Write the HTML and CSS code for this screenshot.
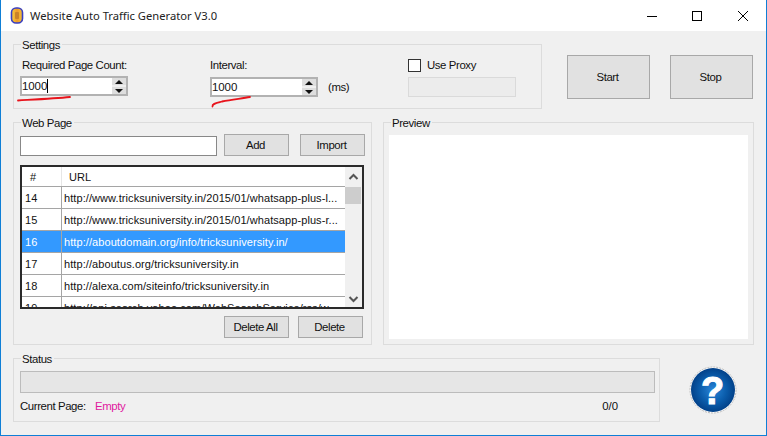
FILE: index.html
```html
<!DOCTYPE html>
<html lang="en">
<head>
<meta charset="utf-8">
<title>Website Auto Traffic Generator V3.0</title>
<link rel="stylesheet" href="styles.css">
</head>
<body>
<div class="window">
  <header class="titlebar">
    <svg class="app-icon" width="14" height="17" viewBox="0 0 14 17">
      <defs><linearGradient id="ig" x1="0" x2="1" y1="0" y2="0"><stop offset="0" stop-color="#f8d23c"/><stop offset=".5" stop-color="#ee9a2a"/><stop offset="1" stop-color="#f6c43a"/></linearGradient></defs>
      <rect x="1.500" y="1" width="11" height="15" rx="4.500" fill="url(#ig)" stroke="#3a3fc0" stroke-width="1.600"/>
      <rect x="5" y="5" width="4" height="7" rx="1" fill="#c98228"/>
    </svg>
    <span class="title-text">Website Auto Traffic Generator V3.0</span>
    <div class="controls">
      <svg width="10" height="10" viewBox="0 0 10 10"><path d="M0 5.500H10" stroke="#000" fill="none"/></svg>
      <svg width="10" height="10" viewBox="0 0 10 10"><rect x=".5" y=".5" width="9" height="9" stroke="#000" fill="none"/></svg>
      <svg class="close" width="10" height="10" viewBox="0 0 10 10"><path d="M0 0L10 10M10 0L0 10" stroke="#000" stroke-width="1" fill="none"/></svg>
    </div>
  </header>

  <main class="content">
    <div class="row row-top">
      <section class="group settings">
        <div class="legend">Settings</div>
        <div class="settings-body">
          <div class="field field-count">
            <label class="field-label">Required Page Count:</label>
            <div class="spin">
              <span class="spin-value">1000<i class="caret"></i></span>
              <span class="stepper"><b class="up"></b><b class="down"></b></span>
            </div>
          </div>
          <div class="field field-interval">
            <label class="field-label">Interval:</label>
            <div class="spin-line">
              <div class="spin">
                <span class="spin-value">1000</span>
                <span class="stepper"><b class="up"></b><b class="down"></b></span>
              </div>
              <span class="unit">(ms)</span>
            </div>
          </div>
          <div class="field field-proxy">
            <div class="check-line"><span class="checkbox"></span><span>Use Proxy</span></div>
            <div class="disabled-box"></div>
          </div>
        </div>
      </section>
      <div class="actions">
        <button class="btn big">Start</button>
        <button class="btn big">Stop</button>
      </div>
    </div>

    <div class="row row-mid">
      <section class="group webpage">
        <div class="legend">Web Page</div>
        <div class="add-line">
          <div class="url-input"></div>
          <button class="btn small">Add</button>
          <button class="btn small import">Import</button>
        </div>
        <div class="list">
          <div class="list-main">
            <div class="list-row head"><span class="c1 hash">#</span><span class="c2 pad">URL</span></div>
            <div class="list-row"><span class="c1">14</span><span class="c2">http://www.tricksuniversity.in/2015/01/whatsapp-plus-l...</span></div>
            <div class="list-row"><span class="c1">15</span><span class="c2">http://www.tricksuniversity.in/2015/01/whatsapp-plus-r...</span></div>
            <div class="list-row selected"><span class="c1">16</span><span class="c2">http://aboutdomain.org/info/tricksuniversity.in/</span></div>
            <div class="list-row"><span class="c1">17</span><span class="c2">http://aboutus.org/tricksuniversity.in</span></div>
            <div class="list-row"><span class="c1">18</span><span class="c2">http://alexa.com/siteinfo/tricksuniversity.in</span></div>
            <div class="list-row"><span class="c1">19</span><span class="c2">http://api.search.yahoo.com/WebSearchService/rss/w...</span></div>
          </div>
          <div class="scrollbar">
            <svg width="17" height="20" viewBox="0 0 17 20"><path d="M4.500 12L8.500 8L12.500 12" stroke="#555" stroke-width="2" fill="none"/></svg>
            <div class="thumb"></div>
            <svg class="arrow-down" width="17" height="20" viewBox="0 0 17 20"><path d="M4.500 8L8.500 12L12.500 8" stroke="#555" stroke-width="2" fill="none"/></svg>
          </div>
        </div>
        <div class="delete-line">
          <button class="btn small">Delete All</button>
          <button class="btn small">Delete</button>
        </div>
      </section>
      <section class="group preview">
        <div class="legend">Preview</div>
        <div class="preview-pane"></div>
      </section>
    </div>

    <div class="row row-bottom">
      <section class="group status">
        <div class="legend">Status</div>
        <div class="progress"></div>
        <div class="status-line">
          <span class="current">Current Page:</span>
          <span class="empty">Empty</span>
          <span class="count">0/0</span>
        </div>
      </section>
      <svg class="help" width="48" height="48" viewBox="0 0 48 48">
        <defs><radialGradient id="hg" cx="50%" cy="50%" r="55%"><stop offset="0" stop-color="#2a86d8"/><stop offset=".55" stop-color="#0a5cab"/><stop offset="1" stop-color="#003a80"/></radialGradient></defs>
        <circle cx="24" cy="24" r="23" fill="#fff" stroke="#bbb" stroke-width="1" stroke-dasharray="2 1"/>
        <circle cx="24" cy="24" r="22" fill="url(#hg)"/>
        <text x="23.500" y="38" class="help-mark">?</text>
      </svg>
    </div>
  </main>

  <svg class="scribble" width="767" height="120" viewBox="0 0 767 120">
    <path d="M18 100.500C35 99.500 55 98.500 70 97" stroke="#e8141c" stroke-width="1.800" fill="none" stroke-linecap="round"/>
    <path d="M212.500 106.500C212 103.500 216 103 222 101.500C232 99.500 242 98.500 250 97" stroke="#e8141c" stroke-width="1.800" fill="none" stroke-linecap="round"/>
  </svg>
</div>
</body>
</html>
```
FILE: styles.css
```css
* { box-sizing: border-box; }
html, body { margin: 0; padding: 0; }
body {
  font: 11.400px/14px "Liberation Sans", Arial, sans-serif;
  letter-spacing: -0.4px;
  color: #111;
  background: #f0f0f0;
}

.window {
  position: relative;
  width: 767px;
  height: 436px;
  border: 1px solid #0f7fd6;
  border-top: 0;
  background: #f0f0f0;
  overflow: hidden;
}

.titlebar {
  display: flex;
  align-items: center;
  height: 31px;
  background: #fff;
  padding-left: 9px;
}
.app-icon { margin-right: 6px; }
.title-text { font: 11.200px/16px "Noto Sans", sans-serif; letter-spacing: 0; color: #222; }
.controls { display: flex; gap: 35px; margin-left: auto; margin-right: 18px; }
.close { margin-left: 1px; }

.content { padding: 13px 0 0 12px; }
.row { display: flex; }
.row-mid { margin-top: 13px; }
.row-bottom { margin-top: 13px; }

.group { border: 1px solid #dcdcdc; }
.legend {
  width: max-content;
  margin: -7px 0 0 7px;
  padding: 0 2px 0 1px;
  background: #f0f0f0;
  line-height: 14px;
}

.settings { width: 529px; height: 65px; }
.settings-body { display: flex; padding: 6px 0 0 6px; }
.field-label { display: block; margin-bottom: 4px; }
.field-count { width: 190px; }
.field-count .field-label { padding-left: 2px; }
.field-interval { width: 198px; }
.field-interval .field-label { margin-bottom: 5px; }
.spin-line { display: flex; align-items: center; }
.unit { margin-left: 10px; }

.spin {
  display: flex;
  width: 108px;
  height: 20px;
  border: 2px solid #b2b2b2;
  background: #fff;
  justify-content: space-between;
}
.spin-value { padding: 1px 0 0; font-size: 11.500px; letter-spacing: -0.1px; line-height: 14px; }
.caret { display: inline-block; width: 1px; height: 14px; background: #000; vertical-align: -3px; }
.stepper { display: flex; flex-direction: column; width: 14px; gap: 2px; background: #efefef; }
.stepper b { flex: 1; background: #dedede; position: relative; }
.stepper b::after {
  content: "";
  position: absolute;
  left: 3px;
  top: 2px;
  border-left: 4px solid transparent;
  border-right: 4px solid transparent;
}
.stepper .up::after { border-bottom: 4px solid #111; }
.stepper .down::after { border-top: 4px solid #111; }

.check-line { display: flex; align-items: center; gap: 6px; height: 14px; }
.checkbox { width: 13px; height: 13px; border: 1px solid #333; background: #fff; }
.disabled-box { width: 108px; height: 20px; margin-top: 5px; border: 1px solid #dadada; background: #ececec; }

.actions { display: flex; gap: 20px; margin: 11px 0 0 25px; }
.btn {
  font: 11.400px/14px "Liberation Sans", Arial, sans-serif;
  letter-spacing: -0.4px;
  color: #111;
  background: #e1e1e1;
  border: 1px solid #a8a8a8;
  padding: 0 2px 1px 0;
}
.big { width: 83px; height: 44px; }
.small { width: 65px; height: 22px; }

.webpage { width: 359px; height: 223px; padding-left: 6px; }
.webpage .legend { margin-left: 1px; }
.add-line { display: flex; margin-top: 4px; align-items: flex-end; }
.url-input { width: 197px; height: 20px; background: #fff; border: 1px solid #888; margin-right: 7px; }
.import { margin-left: 11px; }

.list {
  display: flex;
  width: 344px;
  height: 144px;
  margin-top: 9px;
  border: 2px solid #2a2a2a;
  background: #fff;
  overflow: hidden;
}
.list-main { flex: 1; min-width: 0; }
.list-row {
  display: flex;
  height: 22px;
  border-bottom: 1px solid #a5a5a5;
  font-size: 11px;
  line-height: 23px;
  white-space: nowrap;
  letter-spacing: 0.08px;
}
.list-row.head { height: 20px; line-height: 21px; }
.c1 { width: 40px; flex: none; padding-left: 3px; border-right: 1px solid #a5a5a5; }
.head .c1 { border-right-color: #e6e6e6; }
.hash { padding-left: 8px; }
.c2 { padding-left: 2px; }
.c2.pad { padding-left: 7px; }
.selected { background: #3399ff; color: #fff; }
.scrollbar { display: flex; flex-direction: column; width: 17px; flex: none; background: #f0f0f0; }
.thumb { height: 17px; background: #cdcdcd; margin: 0 1px 0 0; }
.arrow-down { margin-top: auto; margin-bottom: -2px; }

.delete-line { display: flex; gap: 9px; margin: 7px 0 0 204px; }

.preview { width: 371px; height: 223px; margin-left: 11px; padding: 0 5px; }
.preview .legend { margin-left: 2px; }
.preview-pane { width: 359px; height: 204px; margin-top: 5px; background: #fff; }

.status { width: 647px; height: 64px; padding: 0 4px 0 6px; }
.status .legend { margin-left: 1px; }
.progress { height: 22px; margin-top: 5px; background: #e6e6e6; border: 1px solid #bcbcbc; }
.status-line { display: flex; margin-top: 6px; }
.current { width: 75px; }
.empty { color: #e0189f; }
.count { margin-left: auto; margin-right: 37px; letter-spacing: 0; }

.help { margin: 8px 0 0 29px; }
.help-mark { font: 700 38px "Liberation Sans", Arial, sans-serif; letter-spacing: 0; fill: #fff; stroke: #fff; stroke-width: 1px; text-anchor: middle; }

.scribble { position: absolute; left: -1px; top: 0; pointer-events: none; }
```
